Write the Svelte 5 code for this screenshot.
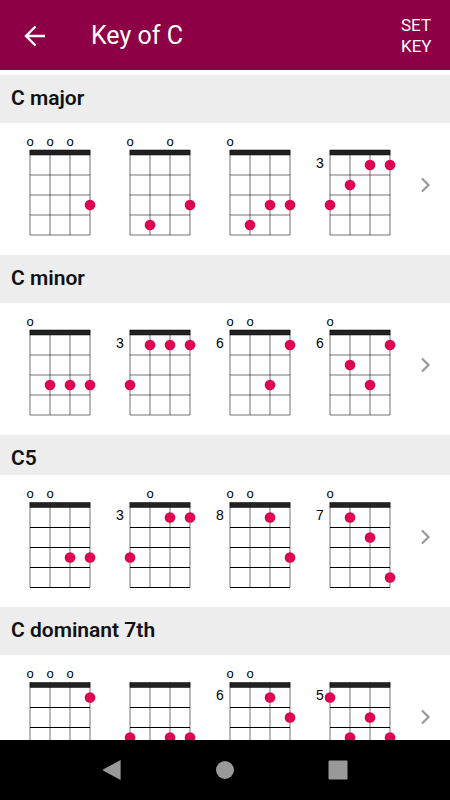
<script lang="ts">
  type Chord = {
    base?: number;
    open: number[];
    // [string, fret] pairs, strings counted from the left
    dots: [number, number][];
  };
  type Group = { name: string; short?: boolean; crisp?: boolean; chords: Chord[] };

  const groups: Group[] = [
    {
      name: "C major",
      chords: [
        { open: [0, 1, 2], dots: [[3, 3]] },
        { open: [0, 2], dots: [[1, 4], [3, 3]] },
        { open: [0], dots: [[1, 4], [2, 3], [3, 3]] },
        { base: 3, open: [], dots: [[0, 3], [1, 2], [2, 1], [3, 1]] },
      ],
    },
    {
      name: "C minor",
      chords: [
        { open: [0], dots: [[1, 3], [2, 3], [3, 3]] },
        { base: 3, open: [], dots: [[0, 3], [1, 1], [2, 1], [3, 1]] },
        { base: 6, open: [0, 1], dots: [[2, 3], [3, 1]] },
        { base: 6, open: [0], dots: [[1, 2], [2, 3], [3, 1]] },
      ],
    },
    {
      name: "C5",
      short: true,
      crisp: true,
      chords: [
        { open: [0, 1], dots: [[2, 3], [3, 3]] },
        { base: 3, open: [1], dots: [[0, 3], [2, 1], [3, 1]] },
        { base: 8, open: [0, 1], dots: [[2, 1], [3, 3]] },
        { base: 7, open: [0], dots: [[1, 1], [2, 2], [3, 4]] },
      ],
    },
    {
      name: "C dominant 7th",
      crisp: true,
      chords: [
        { open: [0, 1, 2], dots: [[3, 1]] },
        { open: [], dots: [[0, 3], [2, 3], [3, 3]] },
        { base: 6, open: [0, 1], dots: [[2, 1], [3, 2]] },
        { base: 5, open: [], dots: [[0, 1], [1, 3], [2, 2], [3, 3]] },
      ],
    },
  ];

  const stringX = (s: number) => 30 + s * 20;
</script>

{#snippet diagram(chord: Chord, crisp: boolean)}
  <!-- a half pixel drop puts the fret lines on whole pixel rows -->
  {@const top = crisp ? 27.5 : 27}
  <svg class="diagram" viewBox="0 0 100 132" role="img" aria-label="Chord diagram">
    {#each chord.open as s}
      <text class="open" x={stringX(s)} y={top - 4.5}>o</text>
    {/each}
    {#if chord.base}
      <text class="base" x="20" y={top + 17.5}>{chord.base}</text>
    {/if}
    {#each [0, 1, 2, 3] as s}
      <line class="wire" x1={stringX(s)} x2={stringX(s)} y1={top} y2={top + 85} />
    {/each}
    {#each [1, 2, 3, 4] as f}
      <line class="wire" class:crisp x1="30" x2="90" y1={top + 5 + f * 20} y2={top + 5 + f * 20} />
    {/each}
    <rect class="nut" x="30" y={top} width="60" height="5" />
    {#each chord.dots as [s, f]}
      <circle class="dot" cx={stringX(s)} cy={top + f * 20 - 5} r="5.3" />
    {/each}
  </svg>
{/snippet}

<div class="app">
  <header class="bar">
    <button class="back" aria-label="Back">
      <svg width="22" height="22" viewBox="0 0 22 22">
        <path d="M11.5 1.5 2 11l9.5 9.5M2 11h19" />
      </svg>
    </button>
    <h1>Key of C</h1>
    <button class="set-key">SET KEY</button>
  </header>

  <main>
    {#each groups as group}
      <section>
        <h2 class:short={group.short}>{group.name}</h2>
        <a class="row" href="#chords" aria-label="{group.name} chords">
          {#each group.chords as chord}
            {@render diagram(chord, !!group.crisp)}
          {/each}
          <svg class="chevron" width="12" height="18" viewBox="0 0 12 18">
            <path d="M2 2.5 8.5 9 2 15.5" />
          </svg>
        </a>
      </section>
    {/each}
  </main>

  <nav aria-label="System">
    <button aria-label="Back">
      <svg width="20" height="20" viewBox="0 0 20 20"><path d="M17.6 0v20L0 10.4v-.8z" /></svg>
    </button>
    <button aria-label="Home">
      <svg width="20" height="20" viewBox="0 0 20 20"><circle cx="10" cy="10" r="9" /></svg>
    </button>
    <button aria-label="Recent apps">
      <svg width="20" height="20" viewBox="0 0 20 20"><rect x=".5" y=".5" width="19" height="19" rx="1" /></svg>
    </button>
  </nav>
</div>

<style>
  :global(body) {
    margin: 0;
  }
  .app {
    display: flex;
    flex-direction: column;
    height: 100vh;
    background: #fff;
    color: #111;
    font-family: Roboto, "Liberation Sans", sans-serif;
  }
  button {
    margin: 0;
    padding: 0;
    border: 0;
    background: none;
    color: inherit;
    font: inherit;
    cursor: pointer;
  }

  .bar {
    display: flex;
    align-items: center;
    flex: none;
    height: 70px;
    padding: 2px 15px 0 24px;
    box-sizing: border-box;
    background: #8e0045;
    color: #fff;
  }
  .back {
    display: flex;
  }
  .back path {
    fill: none;
    stroke: #fff;
    stroke-width: 2.4;
  }
  h1 {
    flex: 1;
    margin: 0 0 0 45px;
    font-size: 25px;
    font-weight: 400;
    line-height: 30px;
  }
  .set-key {
    width: 34px;
    font-size: 17px;
    line-height: 21px;
    text-align: left;
  }

  main {
    flex: 1;
    min-height: 0;
    padding-top: 5px;
    overflow-y: auto;
    scrollbar-width: none;
  }
  h2 {
    margin: 0;
    padding: 11px 11px 13px;
    background: #ededed;
    font-size: 21px;
    font-weight: 600;
    line-height: 24px;
  }
  h2.short {
    padding-bottom: 5px;
  }
  .row {
    display: flex;
    align-items: center;
    height: 132px;
    color: inherit;
    text-decoration: none;
  }
  .diagram {
    flex: none;
    width: 100px;
    height: 132px;
  }
  .open,
  .base {
    fill: #000;
    font-family: "Liberation Sans", sans-serif;
    font-size: 13px;
    text-anchor: middle;
  }
  .base {
    font-size: 14px;
  }
  .wire {
    stroke: #000;
    stroke-opacity: 0.55;
  }
  .wire.crisp {
    stroke-opacity: 1;
  }
  .nut {
    fill: #222;
    stroke: #000;
    stroke-width: 0.5;
  }
  .dot {
    fill: #e00051;
  }
  .chevron {
    margin: 0 18px 8px auto;
  }
  .chevron path {
    fill: none;
    stroke: #999;
    stroke-width: 2.2;
  }

  nav {
    display: flex;
    flex: none;
    height: 60px;
    padding: 0 12.5%;
    background: #000;
  }
  nav button {
    display: flex;
    flex: 1;
    align-items: center;
    justify-content: center;
  }
  nav svg {
    fill: #999;
  }
</style>
